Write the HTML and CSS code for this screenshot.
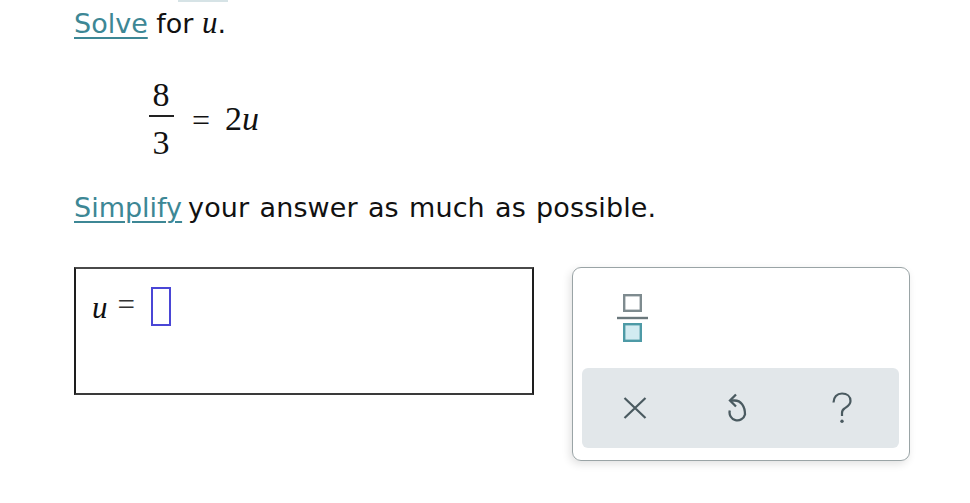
FILE: index.html
```html
<!DOCTYPE html>
<html>
<head>
<meta charset="utf-8">
<link rel="stylesheet" href="styles.css">
</head>
<body>
<div class="page">
  <div class="topmark"></div>
  <p class="line first"><a class="term">Solve</a> for <span class="mvar">u</span>.</p>
  <div class="equation">
    <span class="frac"><span class="num">8</span><span class="bar"></span><span class="den">3</span></span>
    <span class="eq">=</span>
    <span class="rhs">2<i>u</i></span>
  </div>
  <p class="line second"><a class="term">Simplify</a><span class="rest">your answer as much as possible.</span></p>
  <div class="work">
    <div class="answer">
      <span class="avar">u</span><span class="aeq">=</span><span class="slot"></span>
    </div>
    <div class="palette">
      <div class="tools">
        <svg class="fracicon" width="32" height="50" viewBox="0 0 32 50">
          <rect x="7.2" y="2.2" width="16.6" height="15.6" fill="none" stroke="#7e8b8f" stroke-width="2.4"/>
          <line x1="0" y1="25" x2="31" y2="25" stroke="#6a787c" stroke-width="2.4"/>
          <rect x="7.2" y="31.2" width="16.6" height="16.6" fill="#d2ebf1" stroke="#4d9aa6" stroke-width="2.4"/>
        </svg>
      </div>
      <div class="actions">
        <svg class="ix" width="24" height="22" viewBox="0 0 24 22"><path d="M1.5 1 L22.5 21 M22.5 1 L1.5 21" stroke="#4a5a60" stroke-width="2.2" fill="none"/></svg>
        <svg class="iundo" width="19" height="31" viewBox="0 0 19 31"><path d="M8 1.5 L2 7.5 L8 13.5" stroke="#4a5a60" stroke-width="2.3" fill="none"/><path d="M2.5 7.5 H6.5 C13 7.5 17 13 17 21.5 A7.8 7.8 0 1 1 1.8 17.5" stroke="#4a5a60" stroke-width="2.3" fill="none"/></svg>
        <svg class="ihelp" width="22" height="32" viewBox="0 0 22 32"><path d="M2.5 10.5 C2.5 5 6 1.5 11 1.5 C16 1.5 19.5 4.5 19.5 9 C19.5 13 16 15 13.5 16.5 C11.8 17.6 11 19 11 21 V24" stroke="#4a5a60" stroke-width="2.2" fill="none"/><circle cx="11" cy="29.3" r="1.7" fill="#4a5a60"/></svg>
      </div>
    </div>
  </div>
</div>
</body>
</html>
```

FILE: styles.css
```css
* { box-sizing: border-box; }
html, body { margin: 0; padding: 0; background: #fff; }
body { width: 970px; height: 503px; overflow: hidden; font-family: "DejaVu Sans", Verdana, sans-serif; color: #111; }
.page { position: relative; padding-left: 74px; }
.topmark { position: absolute; left: 178px; top: 0; width: 50px; height: 2px; background: #d6e3e6; }
.line { margin: 0; font-size: 27px; line-height: 30px; white-space: nowrap; }
.first { padding-top: 8.4px; }
.term { color: #3d8795; text-decoration: underline; text-decoration-thickness: 2px; text-underline-offset: 4px; }
.mvar { font-family: "Liberation Serif", serif; font-style: italic; font-size: 31px; }
.equation { display: flex; align-items: center; margin-top: 38.2px; margin-left: 74px; font-family: "Liberation Serif", serif; font-size: 34px; color: #111; }
.frac { display: flex; flex-direction: column; align-items: center; width: 26px; }
.num, .den { line-height: 34px; }
.bar { width: 25px; height: 2px; background: #222; margin: 3.5px 0 8.6px; }
.eq { margin-left: 18px; margin-right: 15px; font-size: 32px; line-height: 34px; margin-top: 2px; }
.rhs { line-height: 34px; }
.rhs i { font-style: italic; }
.second { margin-top: 33.7px; }
.rest { margin-left: 6px; word-spacing: 1.5px; letter-spacing: 0.12px; }
.work { display: flex; margin-top: 43.6px; }
.answer { width: 460px; height: 128px; border: 2px solid #1e1e1e; border-top-color: #4a4a4a; border-bottom-color: #3a3a3a; display: flex; align-items: flex-start; padding: 18px 0 0 16px; font-family: "Liberation Serif", serif; }
.avar { font-style: italic; font-size: 31px; line-height: 31px; margin-top: 5px; }
.aeq { font-size: 31px; line-height: 31px; margin: 2px 0 0 10px; color: #333; }
.slot { width: 20px; height: 39px; border: 2px solid #4a46d6; margin-left: 16px; }
.palette { margin-left: 38px; width: 338px; height: 194px; border: 1.5px solid #9aa4a6; border-radius: 9px; box-shadow: -2px 3px 8px rgba(0,0,0,0.12); padding: 0 10px 11px 9px; display: flex; flex-direction: column; }
.tools { height: 100px; padding: 25px 0 0 34.5px; }
.fracicon { display: block; }
.actions { height: 80px; background: #e2e7ea; border-radius: 6px; display: flex; align-items: center; padding: 1px 0 0 41px; }
.iundo { margin-left: 81px; }
.ihelp { margin-left: 84px; }
```
